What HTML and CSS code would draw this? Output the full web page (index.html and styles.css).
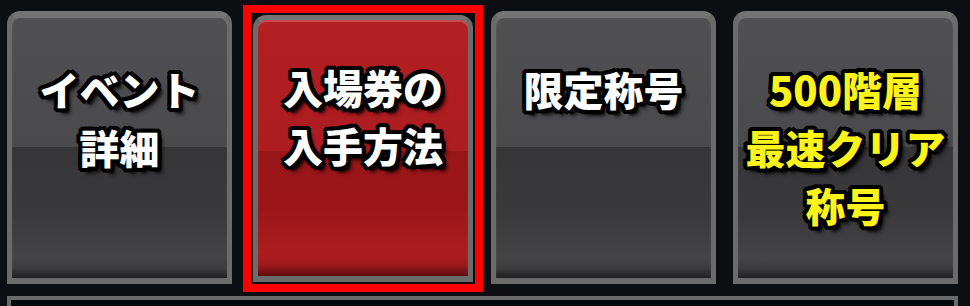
FILE: index.html
```html
<!DOCTYPE html>
<html lang="ja">
<head>
<meta charset="utf-8">
<title>Tabs</title>
<link rel="stylesheet" href="styles.css">
</head>
<body>
<div class="tabs">
  <div class="slot">
    <div class="btn gray"><div class="body"><div class="label">イベント<br>詳細</div></div></div>
  </div>
  <div class="slot">
    <div class="frame">
      <div class="btn red small"><div class="body"><div class="label">入場券の<br>入手方法</div></div></div>
    </div>
  </div>
  <div class="slot">
    <div class="btn gray"><div class="body"><div class="label">限定称号</div></div></div>
  </div>
  <div class="slot">
    <div class="btn gray"><div class="body"><div class="label yellow">500階層<br>最速クリア<br>称号</div></div></div>
  </div>
</div>
<div class="panel"></div>
</body>
</html>
```

FILE: styles.css
```css
html, body {
  margin: 0;
  padding: 0;
  background: #0c0e11;
  overflow: hidden;
}
body {
  width: 970px;
  height: 306px;
  font-family: "Noto Sans CJK JP", "Noto Sans", sans-serif;
}
.tabs {
  display: flex;
  gap: 17px;
  padding: 11px 0 0 7px;
  height: 273px;
}
.slot {
  width: 225px;
  height: 273px;
  flex: none;
}
.frame {
  margin: -6px -9px 0 -6px;
  border: 8px solid #ff0000;
  padding: 2px;
  background: #0c0e11;
}
.btn {
  box-sizing: border-box;
  height: 273px;
  border: 5px solid #6b6b6b;
  border-bottom-width: 6px;
  border-top-color: #747474;
  border-radius: 13px 13px 0 0;
  background: #6b6b6b;
}
.btn.small {
  height: 267px;
}
.body {
  height: 100%;
  box-sizing: border-box;
  border-radius: 8px 8px 0 0;
  box-shadow: inset 0 2px 1px rgba(255,255,255,0.22);
  text-align: center;
  padding-top: 44px;
}
.gray .body {
  background: linear-gradient(to bottom,
    #505052 0px, #4a4a4c 131px, #363638 131px, #3a3a3c 200px,
    #444446 242px, #3c3c3e 252px, #202022 262px);
}
.red .body {
  background: linear-gradient(to bottom,
    #b41f23 0px, #ac1c20 131px, #981518 131px, #9c1619 190px,
    #ac1c20 232px, #a21a1d 244px, #5e0c0e 256px);
  padding-top: 38px;
}
.label {
  color: #ffffff;
  font-size: 40px;
  font-weight: 900;
  line-height: 58px;
  white-space: nowrap;
  text-shadow:
    -3px -3px 0 #000, 0 -3px 0 #000, 3px -3px 0 #000,
    -3px 0 0 #000, 3px 0 0 #000,
    -3px 3px 0 #000, 0 3px 0 #000, 3px 3px 0 #000,
    -2px -4px 0 #000, 2px -4px 0 #000, -4px 2px 0 #000, 4px 2px 0 #000,
    -4px -2px 0 #000, 4px -2px 0 #000, -2px 4px 0 #000, 2px 4px 0 #000,
    4px 5px 3px rgba(0,0,0,0.8), 5px 6px 4px rgba(0,0,0,0.5);
}
.label.yellow {
  color: #fbf31a;
}
.panel {
  box-sizing: border-box;
  margin: 12px 12px 0 7px;
  height: 10px;
  border: 4px solid #6b6b6b;
  border-bottom: none;
  background: #070809;
}
```
